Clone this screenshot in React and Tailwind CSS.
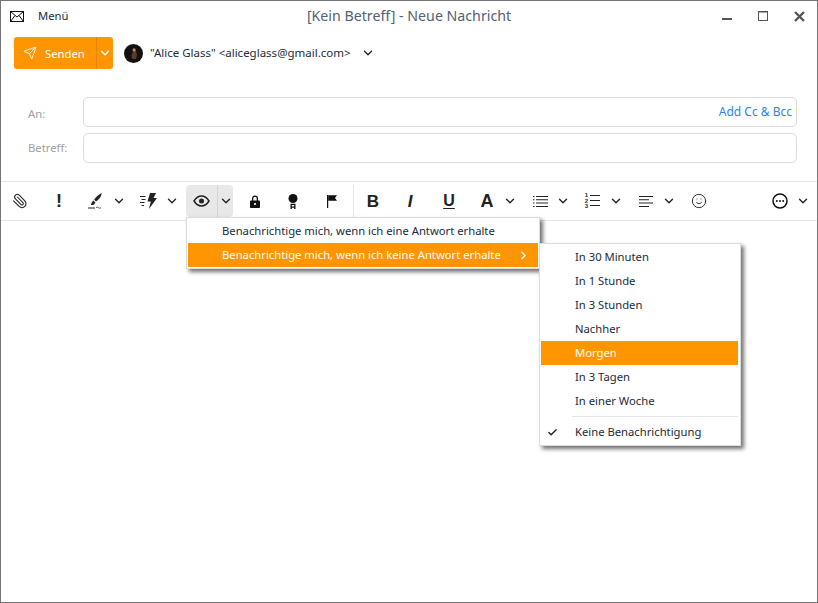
import React from 'react';
import { ChevronDown, ChevronRight, Check, Paperclip, Send, Smile } from 'lucide-react';

const ORANGE = 'bg-[#ff9500]';

const Chevron = ({ className = '' }) => (
  <div className={`w-4 h-6 flex items-center justify-center text-[#222] ${className}`}>
    <ChevronDown size={14} strokeWidth={2.4} />
  </div>
);

const Tool = ({ className = '', children }) => (
  <div className={`w-6 h-6 flex items-center justify-center text-[#222] shrink-0 ${className}`}>{children}</div>
);

const MailIcon = () => (
  <svg width="14" height="11" viewBox="0 0 14 11" fill="none" stroke="#111" strokeWidth="1">
    <rect x="0.5" y="0.5" width="13" height="10" />
    <path d="M0.5 0.5L7 6L13.5 0.5M0.5 10.500L5 4.500M13.5 10.500L9 4.500" />
  </svg>
);

const PenIcon = () => (
  <svg width="17" height="17" viewBox="0 0 17 17" fill="#222">
    <path d="M14.500 0c.3 3-2.500 6.500-5.500 8.500L7.200 6.700C9 3.800 12 1.200 14.500 0z" />
    <path d="M6.300 7.500l2.200 2.200-1.500 1.800c-.8.500-1.800.7-3 .5.100-1.300.600-2.800 2.300-4.500z" />
    <path d="M1 14.500h7v1H1z" />
    <path d="M9 15c1-1.200 2-1.200 2.500-.3.500.7 1.500.6 2.500 0" fill="none" stroke="#222" strokeWidth="0.8" />
  </svg>
);

const FlashIcon = () => (
  <svg width="18" height="16" viewBox="0 0 18 16" fill="#222">
    <path d="M0 3h5.500v1H0zM1.500 6h4v1h-4zM0 9h4.500v1H0zM1.500 12h2.500v1H1.500z" />
    <path d="M10 0h6l-2.500 5H17l-8 11 1.800-7.500H7.500z" />
  </svg>
);

const EyeIcon = () => (
  <svg width="17" height="12" viewBox="0 0 17 12" fill="none" stroke="#222" strokeWidth="1.500">
    <path d="M1 6c2-3.200 4.500-5 7.500-5s5.500 1.800 7.500 5c-2 3.200-4.500 5-7.500 5S3 9.200 1 6z" />
    <circle cx="8.500" cy="6" r="2.500" fill="#222" stroke="none" />
  </svg>
);

const LockIcon = () => (
  <svg width="10" height="13" viewBox="0 0 10 13" fill="#111">
    <path d="M2 5.500V3.500C2 1.500 3.200.5 5 .5s3 1 3 3v2h1.200c.4 0 .8.400.8.800v5.900c0 .4-.4.800-.8.800H.8c-.4 0-.8-.4-.8-.8V6.300c0-.4.400-.8.800-.8zm1.300 0h3.400v-2C6.700 2.400 6 1.700 5 1.700s-1.700.7-1.700 1.800z" fillRule="evenodd" />
    <circle cx="5" cy="9" r="1.100" fill="#fff" />
  </svg>
);

const BadgeIcon = () => (
  <svg width="10" height="15" viewBox="0 0 10 15" fill="#111">
    <circle cx="5" cy="4.500" r="4.500" />
    <path d="M2.500 9.800h5V15H6.200v-1.300H3.800V15H2.500zM3.800 11v1.500h2.400V11z" fillRule="evenodd" />
  </svg>
);

const FlagIcon = () => (
  <svg width="10" height="13" viewBox="0 0 10 13" fill="#111">
    <path d="M0 0h1.200v13H0z" />
    <path d="M1.200.3H10L8 3l2 2.700H1.200z" />
  </svg>
);

const ListIcon = () => (
  <svg width="15" height="11" viewBox="0 0 15 11" fill="#222">
    <path d="M3 0h12v1H3zM3 3.300h12v1H3zM3 6.600h12v1H3zM3 9.900h12v1H3zM0 0h1.500v1H0zM0 3.300h1.500v1H0zM0 6.600h1.500v1H0zM0 9.900h1.500v1H0z" />
  </svg>
);

const NumListIcon = () => (
  <div className="relative w-[16px] h-[14px]">
    <div className="absolute left-0 top-[-1px] w-[5px] text-[6px] leading-[5.500px] font-bold text-center text-[#222] font-['Liberation_Sans',sans-serif]">1<br />2<br />3</div>
    <svg className="absolute left-0 top-0" width="16" height="14" viewBox="0 0 16 14" fill="#222">
      <path d="M6 1h10v1H6zM6 6h10v1H6zM6 11h10v1H6z" />
    </svg>
  </div>
);

const AlignIcon = () => (
  <svg width="14" height="11" viewBox="0 0 14 11" fill="#222">
    <path d="M0 0h14v1H0zM0 3.300h10v1H0zM0 6.600h14v1H0zM0 9.900h10v1H0z" />
  </svg>
);

const MoreIcon = () => (
  <svg width="16" height="16" viewBox="0 0 16 16" fill="none" stroke="#111" strokeWidth="1.500">
    <circle cx="8" cy="8" r="7" />
    <circle cx="4.800" cy="8" r="1" fill="#111" stroke="none" />
    <circle cx="8" cy="8" r="1" fill="#111" stroke="none" />
    <circle cx="11.200" cy="8" r="1" fill="#111" stroke="none" />
  </svg>
);

const Avatar = () => (
  <svg width="19" height="19" viewBox="0 0 19 19">
    <circle cx="9.500" cy="9.500" r="9.500" fill="#141010" />
    <path d="M9 4c2-.5 3.500 1 3 3l1 4-1 4H8l-.5-4L9 8z" fill="#5a3a28" />
    <circle cx="10" cy="6" r="1.500" fill="#b98a66" />
  </svg>
);

const FieldRow = ({ label, labelClass = '', children }) => (
  <div className="flex items-center">
    <div className={`w-[82px] pl-[27px] text-[11.250px] text-[#a0a0a0] ${labelClass}`}>{label}</div>
    <div className="w-[714px] h-[30px] border border-[#dedede] rounded-[5px] flex items-center justify-end pr-[4px]">
      {children}
    </div>
  </div>
);

const laterItems = ['In 30 Minuten', 'In 1 Stunde', 'In 3 Stunden', 'Nachher', 'Morgen', 'In 3 Tagen', 'In einer Woche'];

export default function App() {
  return (
    <div className="relative w-[818px] h-[603px] bg-white border border-[#747474] overflow-hidden text-[#222b3a] font-['Noto_Sans',sans-serif]">
      {/* title bar */}
      <div className="relative h-[30px] flex items-center pl-[9px] pr-[12px]">
        <MailIcon />
        <span className="ml-[14px] text-[11.250px] text-[#222b3a]">Menü</span>
        <div className="absolute left-0 right-0 top-[4px] text-center text-[14.200px] text-[#556070]">[Kein Betreff] - Neue Nachricht</div>
        <div className="ml-auto flex items-center gap-[26px] text-[#555]">
          <svg width="10" height="10" viewBox="0 0 10 10" fill="#555"><path d="M0 7h10v2H0z" /></svg>
          <svg width="10" height="10" viewBox="0 0 10 10" fill="none" stroke="#555"><rect x="0.500" y="0.500" width="9" height="9" /><path d="M0 1h10" /></svg>
          <svg width="11" height="11" viewBox="0 0 11 11" stroke="#555" strokeWidth="2.400"><path d="M1 1l9 9M10 1l-9 9" /></svg>
        </div>
      </div>

      {/* sender row */}
      <div className="flex items-center h-[32px] mt-[6px] pl-[13px]">
        <div className={`flex w-[99px] h-[32px] rounded-[3px] text-white ${ORANGE}`}>
          <div className="w-[83px] flex items-center pl-[9px] gap-[8px] border-r border-[#e58600]">
            <Send size={14} strokeWidth={1.500} />
            <span className="text-[11.250px] translate-y-px">Senden</span>
          </div>
          <div className="flex-1 flex items-center justify-center">
            <ChevronDown size={14} strokeWidth={2.400} />
          </div>
        </div>
        <div className="ml-[11px]"><Avatar /></div>
        <span className="ml-[7px] text-[11.500px]">"Alice Glass" &lt;aliceglass@gmail.com&gt;</span>
        <ChevronDown size={14} strokeWidth={2.400} className="ml-[10px] text-[#222]" />
      </div>

      {/* address fields */}
      <div className="mt-[28px] flex flex-col gap-[6px]">
        <FieldRow label="An:" labelClass="translate-y-[2px]">
          <span className="text-[12px] text-[#2f7ff5]">Add Cc &amp; Bcc</span>
        </FieldRow>
        <FieldRow label="Betreff:" />
      </div>

      {/* toolbar */}
      <div className="mt-[18px] h-[40px] border-y border-[#e6e6e6] flex items-center pl-[7px]">
        <Tool><Paperclip size={16} strokeWidth={1.600} className="-scale-x-100" /></Tool>
        <Tool className="ml-[15px]"><span className="text-[18px] font-bold leading-none font-['Liberation_Sans',sans-serif]">!</span></Tool>
        <Tool className="ml-[12px]"><PenIcon /></Tool>
        <Chevron className="ml-[4px]" />
        <Tool className="ml-[10px]"><FlashIcon /></Tool>
        <Chevron className="ml-[3px]" />
        <div className="ml-[6px] w-[47px] h-[32px] rounded-[4px] bg-[#e8e8e8] flex items-center">
          <div className="w-[31px] flex justify-center"><EyeIcon /></div>
          <div className="w-px h-[32px] bg-[#d4d4d4]" />
          <Chevron className="w-[15px]" />
        </div>
        <Tool className="ml-[10px]"><LockIcon /></Tool>
        <Tool className="ml-[14px]"><BadgeIcon /></Tool>
        <Tool className="ml-[15px]"><FlagIcon /></Tool>
        <div className="ml-[9px] w-px h-[32px] bg-[#e6e6e6]" />
        <Tool className="ml-[7px]"><span className="text-[17px] font-bold leading-none font-['Liberation_Sans',sans-serif]">B</span></Tool>
        <Tool className="ml-[13px]"><span className="text-[17px] font-bold italic leading-none font-['Liberation_Sans',sans-serif]">I</span></Tool>
        <Tool className="ml-[15px]"><span className="text-[16px] font-semibold leading-none underline underline-offset-2 font-['Liberation_Sans',sans-serif]">U</span></Tool>
        <Tool className="ml-[14px]"><span className="text-[18px] font-bold leading-none font-['Liberation_Sans',sans-serif]">A</span></Tool>
        <Chevron className="ml-[3px]" />
        <Tool className="ml-[10px]"><ListIcon /></Tool>
        <Chevron className="ml-[3px]" />
        <Tool className="ml-[9px]"><NumListIcon /></Tool>
        <Chevron className="ml-[4px]" />
        <Tool className="ml-[10px]"><AlignIcon /></Tool>
        <Chevron className="ml-[3px]" />
        <Tool className="ml-[10px]"><Smile size={16} strokeWidth={1.400} /></Tool>
        <Tool className="ml-[57px]"><MoreIcon /></Tool>
        <Chevron className="ml-[3px]" />
      </div>

      {/* notify menu */}
      <div className="absolute left-[185px] top-[216px] w-[354px] h-[52px] bg-white border border-[#dcdcdc] shadow-[3px_3px_4px_rgba(0,0,0,0.55)] p-px">
        <div className="h-[24px] flex items-center pl-[34px] text-[11.250px]">Benachrichtige mich, wenn ich eine Antwort erhalte</div>
        <div className={`h-[24px] flex items-center pl-[34px] text-[11.250px] text-white ${ORANGE}`}>
          Benachrichtige mich, wenn ich keine Antwort erhalte
          <ChevronRight size={13} strokeWidth={2.400} className="ml-[16px]" />
        </div>
      </div>

      {/* later submenu */}
      <div className="absolute left-[538px] top-[242px] w-[202px] h-[203px] bg-white border border-[#dcdcdc] shadow-[3px_3px_4px_rgba(0,0,0,0.55)] pt-px pb-px pl-px pr-[2px]">
        {laterItems.map(item => (
          <div key={item} className={`h-[24px] flex items-center pl-[34px] text-[11.250px] ${item === 'Morgen' ? `${ORANGE} text-white` : ''}`}>{item}</div>
        ))}
        <div className="ml-[31px] mt-[3px] h-px bg-[#e6e6e6]" />
        <div className="relative h-[24px] mt-[3px] flex items-center pl-[34px] text-[11.250px]">
          <Check size={11} strokeWidth={3} className="absolute left-[6px] text-[#222]" />
          Keine Benachrichtigung
        </div>
      </div>
    </div>
  );
}
